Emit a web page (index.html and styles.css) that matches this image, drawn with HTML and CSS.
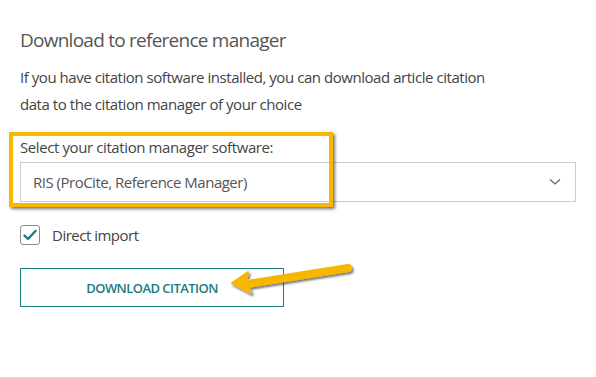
FILE: index.html
```html
<!DOCTYPE html>
<html>
<head>
<meta charset="utf-8">
<link rel="stylesheet" href="styles.css">
</head>
<body>
<div class="panel">
  <h2 class="title">Download to reference manager</h2>
  <p class="intro">If you have citation software installed, you can download article citation data to the citation manager of your choice</p>
  <label class="field-label" for="sw">Select your citation manager software:</label>
  <div class="select">
    <span class="select-value" id="sw">RIS (ProCite, Reference Manager)</span>
    <svg class="chevron" width="12" height="8" viewBox="0 0 12 8"><path d="M1 1.5 L6 6 L11 1.5" fill="none" stroke="#666" stroke-width="1.3"/></svg>
  </div>
  <div class="check-row">
    <span class="checkbox">
      <svg width="14" height="12" viewBox="0 0 14 12"><path d="M1.5 6.5 L5 10 L12.5 2" fill="none" stroke="#1b7b7e" stroke-width="2.4" stroke-linecap="round" stroke-linejoin="round"/></svg>
    </span>
    <span class="check-text">Direct import</span>
  </div>
  <button class="btn">DOWNLOAD CITATION</button>

  <div class="highlight"></div>
  <svg class="arrow" width="140" height="50" viewBox="0 0 140 50">
    <defs>
      <filter id="sh" x="-20%" y="-50%" width="140%" height="200%">
        <feDropShadow dx="1.5" dy="2" stdDeviation="1.2" flood-color="#000" flood-opacity="0.55"/>
      </filter>
    </defs>
    <g filter="url(#sh)" fill="#f7b600" stroke="#f7b600">
      <line x1="123" y1="13" x2="22" y2="29" stroke-width="8" stroke-linecap="round"/>
      <path d="M7 28 L23 17 L21 27 L26 38 Z" stroke-width="2" stroke-linejoin="round"/>
    </g>
  </svg>
</div>
</body>
</html>
```

FILE: styles.css
```css
html, body {
  margin: 0;
  padding: 0;
  background: #fff;
}
.panel {
  position: relative;
  width: 596px;
  height: 377px;
  box-sizing: border-box;
  padding: 26px 20px 0 20px;
  font-family: "Open Sans", "Liberation Sans", sans-serif;
  color: #444;
}
.title {
  margin: 0;
  font-size: 19px;
  line-height: 28px;
  letter-spacing: -0.75px;
  font-weight: 400;
  color: #555;
}
.intro {
  margin: 10px 0 0 0;
  font-size: 15px;
  line-height: 27px;
  letter-spacing: -0.45px;
  color: #444;
  width: 480px;
}
.field-label {
  display: block;
  margin-top: 19px;
  font-size: 15px;
  line-height: 20px;
  letter-spacing: -0.4px;
  color: #444;
}
.select {
  margin-top: 5px;
  height: 40px;
  box-sizing: border-box;
  border: 1px solid #ccc;
  display: flex;
  align-items: center;
  justify-content: space-between;
  padding: 0 14px 0 12px;
}
.select-value {
  font-size: 15px;
  letter-spacing: -0.5px;
  color: #555;
}
.check-row {
  margin-top: 23px;
  height: 20px;
  display: flex;
  align-items: center;
  gap: 12px;
}
.checkbox {
  width: 20px;
  height: 20px;
  box-sizing: border-box;
  border: 1px solid #8a8a8a;
  border-radius: 3px;
  display: flex;
  align-items: center;
  justify-content: center;
}
.check-text {
  font-size: 15px;
  line-height: 20px;
  letter-spacing: -0.5px;
  color: #444;
}
.btn {
  display: block;
  margin-top: 23px;
  width: 264px;
  height: 39px;
  background: #fff;
  border: 1px solid #1b7b7e;
  color: #1b7b7e;
  font-family: "Open Sans", "Liberation Sans", sans-serif;
  font-size: 13px;
  letter-spacing: -0.55px;
  font-weight: 600;
  padding: 0;
}
.highlight {
  position: absolute;
  left: 9px;
  top: 132px;
  width: 324px;
  height: 75px;
  box-sizing: border-box;
  border: 4px solid #f7b600;
  box-shadow: 2px 2px 3px rgba(0, 0, 0, 0.55);
}
.arrow {
  position: absolute;
  left: 225px;
  top: 255px;
}
```
